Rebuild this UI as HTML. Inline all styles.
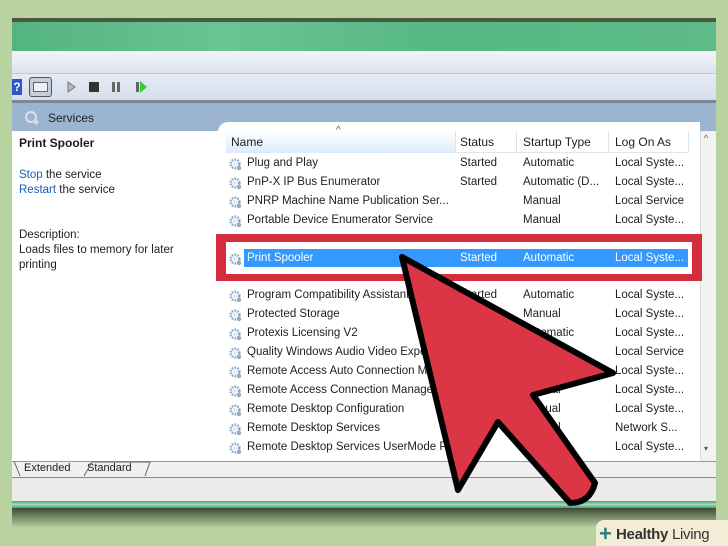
<!DOCTYPE html>
<html><head><style>
*{margin:0;padding:0;box-sizing:border-box}
body{width:728px;height:546px;overflow:hidden;background:#b9d3a0;font-family:"Liberation Sans",sans-serif;font-size:11.5px;color:#1e1e1e;position:relative}
.a{position:absolute;white-space:nowrap}
.g{position:absolute;width:13px;height:13px}
a{color:#1a5fb4}
</style></head><body>
<div class="a" style="left:12px;top:18px;width:704px;height:4px;background:#4a5a40"></div>
<div class="a" style="left:12px;top:22px;width:704px;height:29px;background:linear-gradient(90deg,#54b47f,#6ac493 30%,#57b883 60%,#5cbb86)"></div>
<div class="a" style="left:12px;top:51px;width:704px;height:22px;background:linear-gradient(#f2f4fa,#dde3ef)"></div>
<div class="a" style="left:12px;top:73px;width:704px;height:27px;background:linear-gradient(#e6ebf5,#d6deec);border-top:1px solid #c0c8d6"></div>
<div class="a" style="left:12px;top:79px;width:10px;height:16px;background:#2f56c8;color:#fff;font-weight:bold;font-size:12px;text-align:center;line-height:16px">?</div>
<div class="a" style="left:29px;top:77px;width:23px;height:20px;border:1px solid #555;border-radius:3px;background:#c8ced8"><div style="margin:4px 3px;width:15px;height:10px;border:1px solid #666;background:#eef"></div></div>
<svg class="a" style="left:60px;top:78px" width="100" height="18">
<path d="M8 4 L15 9 L8 14Z" fill="#bbb" stroke="#777"/>
<rect x="29" y="4" width="10" height="10" fill="#333"/>
<rect x="52" y="4" width="3" height="10" fill="#666"/><rect x="57" y="4" width="3" height="10" fill="#666"/>
<rect x="76" y="4" width="3" height="10" fill="#666"/><path d="M80 3 L87 9 L80 15Z" fill="#3c3"/>
</svg>
<div class="a" style="left:12px;top:100px;width:704px;height:3px;background:#7f8794"></div>
<div class="a" style="left:12px;top:103px;width:704px;height:28px;background:#9bb4cf"></div>
<svg class="a" style="left:24px;top:110px" width="16" height="16"><circle cx="7" cy="7" r="5" fill="none" stroke="#dde" stroke-width="2"/><circle cx="12" cy="12" r="2.5" fill="#cde"/></svg>
<div class="a" style="left:48px;top:111px;font-size:12px">Services</div>
<div class="a" style="left:12px;top:131px;width:206px;height:330px;background:#fff"></div>
<div class="a" style="left:218px;top:122px;width:482px;height:339px;background:#fff;border-top-left-radius:10px"></div>
<div class="a" style="left:19px;top:136px;font-weight:bold;font-size:12px">Print Spooler</div>
<div class="a" style="left:19px;top:169px"><a>Stop</a> the service</div>
<div class="a" style="left:19px;top:184px"><a>Restart</a> the service</div>
<div class="a" style="left:19px;top:229px">Description:</div>
<div class="a" style="left:19px;top:244px">Loads files to memory for later</div>
<div class="a" style="left:19px;top:259px">printing</div>
<div class="a" style="left:226px;top:131px;width:462px;height:22px;border-bottom:1px solid #dde6f0"></div>
<div class="a" style="left:226px;top:131px;width:229px;height:22px;background:linear-gradient(#fff,#dcebfa)"></div>
<div class="a" style="left:455px;top:131px;width:1px;height:22px;background:#dde3ea"></div>
<div class="a" style="left:516px;top:131px;width:1px;height:22px;background:#dde3ea"></div>
<div class="a" style="left:608px;top:131px;width:1px;height:22px;background:#dde3ea"></div>
<div class="a" style="left:688px;top:131px;width:1px;height:22px;background:#dde3ea"></div>
<div class="a" style="left:231px;top:135px;font-size:12px">Name</div>
<div class="a" style="left:336px;top:125px;font-size:10px;color:#555">^</div>
<div class="a" style="left:460px;top:135px;font-size:12px">Status</div>
<div class="a" style="left:523px;top:135px;font-size:12px">Startup Type</div>
<div class="a" style="left:615px;top:135px;font-size:12px">Log On As</div>
<div class="a" style="left:700px;top:131px;width:16px;height:330px;background:#f2f2f2;border-left:1px solid #ddd"></div>
<div class="a" style="left:704px;top:133px;font-size:9px;color:#555">^</div>
<div class="a" style="left:704px;top:444px;font-size:8px;color:#555">▾</div>
<div class="a" style="left:216px;top:234px;width:486px;height:47px;background:#d42e3e"></div>
<div class="a" style="left:226px;top:242px;width:466px;height:32px;background:#fff"></div>
<div class="a" style="left:244px;top:249px;width:444px;height:18px;background:#3399ff"></div>
<svg width="0" height="0" style="position:absolute"><defs><g id="gr"><circle cx="6" cy="6" r="4.3" fill="none" stroke="#8aa6c8" stroke-width="2.6" stroke-dasharray="1.6 1.2"/><circle cx="6" cy="6" r="2" fill="#dfe8f4"/><circle cx="10" cy="10" r="2.2" fill="#9ab"/></g></defs></svg>
<div id="rows"></div>
<div class="a" style="left:12px;top:461px;width:704px;height:16px;background:#f0f0f0;border-top:1px solid #999"></div>
<div class="a" style="left:12px;top:477px;width:704px;height:1px;background:#888"></div>
<div class="a" style="left:24px;top:462px;font-size:11px">Extended</div>
<div class="a" style="left:87px;top:462px;font-size:11px">Standard</div>
<svg class="a" style="left:12px;top:461px" width="140" height="16"><path d="M2 0 L8 15 M72 15 L80 1 M80 1 L138 1 L133 15" stroke="#666" fill="none"/></svg>
<div class="a" style="left:12px;top:478px;width:704px;height:23px;background:#ecebea"></div>
<div class="a" style="left:12px;top:501px;width:704px;height:7px;background:linear-gradient(#3aa36f,#a8dcbc 50%,#3aa36f)"></div>
<div class="a" style="left:12px;top:508px;width:704px;height:20px;background:linear-gradient(#3e4a36,#b9d3a0)"></div>
<svg class="a" style="left:0;top:0" width="728" height="546">
<path d="M402 257 L613 373 L533 395 L595 483 Q590 503 570 503 L498 422 L458 490 Z" fill="#dc3545" stroke="#000" stroke-width="6" stroke-linejoin="round"/>
</svg>
<div class="a" style="left:596px;top:520px;width:132px;height:26px;background:#f3ecd6;border-top-left-radius:8px"></div>
<div class="a" style="left:599px;top:523px;color:#2b7d7a;font-size:22px;font-weight:bold;line-height:22px">+</div>
<div class="a" style="left:616px;top:526px;font-size:15px;color:#333;letter-spacing:-0.3px"><b>Healthy</b> Living</div>
<script>
var names=["Plug and Play","PnP-X IP Bus Enumerator","PNRP Machine Name Publication Ser...","Portable Device Enumerator Service","","Print Spooler","","Program Compatibility Assistant Service","Protected Storage","Protexis Licensing V2","Quality Windows Audio Video Experience","Remote Access Auto Connection Manager","Remote Access Connection Manager","Remote Desktop Configuration","Remote Desktop Services","Remote Desktop Services UserMode Port"];
var st=["Started","Started","","","","Started","","Started","","","","","","","",""];
var ty=["Automatic","Automatic (D...","Manual","Manual","","Automatic","","Automatic","Manual","Automatic","","","Manual","Manual","Manual",""];
var lo=["Local Syste...","Local Syste...","Local Service","Local Syste...","","Local Syste...","","Local Syste...","Local Syste...","Local Syste...","Local Service","Local Syste...","Local Syste...","Local Syste...","Network S...","Local Syste..."];
var h="";
for(var i=0;i<16;i++){if(i==4||i==6)continue;var t=155+i*18.9;var c=i==5?"#fff":"#1e1e1e";
h+='<svg class="g" style="left:229px;top:'+(t+3)+'px"><use href="#gr"/></svg>';
h+='<div class="a" style="left:247px;top:'+(t+2)+'px;color:'+c+';max-width:205px;overflow:hidden">'+names[i]+'</div>';
h+='<div class="a" style="left:460px;top:'+(t+2)+'px;color:'+c+'">'+st[i]+'</div>';
h+='<div class="a" style="left:523px;top:'+(t+2)+'px;color:'+c+'">'+ty[i]+'</div>';
h+='<div class="a" style="left:615px;top:'+(t+2)+'px;color:'+c+'">'+lo[i]+'</div>';}
document.getElementById("rows").innerHTML=h;
</script>
</body></html>
